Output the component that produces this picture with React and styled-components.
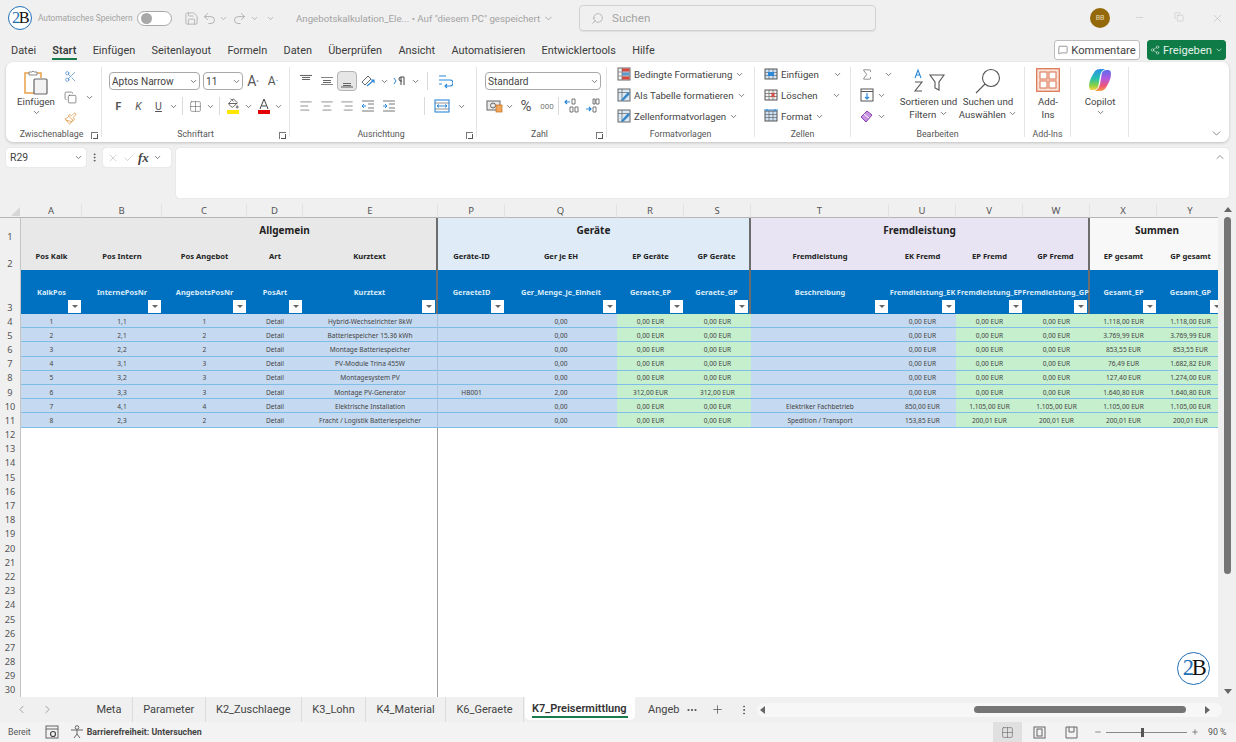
import styled, { createGlobalStyle } from "styled-components";
import {
  AlignCenter,
  AlignLeft,
  AlignRight,
  ChevronDown,
  ChevronLeft,
  ChevronRight,
  ChevronUp,
  Check,
  Copy,
  Grid2x2,
  Minus,
  MoreHorizontal,
  MoreVertical,
  PaintBucket,
  Paintbrush,
  Plus,
  Redo2,
  Save,
  Scissors,
  Search,
  Share2,
  Sigma,
  Undo2,
  X,
  MessageSquare,
  Copy as RestoreIcon,
} from "lucide-react";

const GlobalStyle = createGlobalStyle`
  html, body { margin: 0; padding: 0; background: #f0f0f0; }
  * { box-sizing: border-box; }
  body { font-family: Roboto, "Liberation Sans", sans-serif; color: #444; }
`;

// Spalten der Tabelle
const columns = [
  { id: "A", w: 61, label: "Pos Kalk", field: "KalkPos" },
  { id: "B", w: 80, label: "Pos Intern", field: "InternePosNr" },
  { id: "C", w: 85, label: "Pos Angebot", field: "AngebotsPosNr" },
  { id: "D", w: 56, label: "Art", field: "PosArt" },
  { id: "E", w: 135, label: "Kurztext", field: "Kurztext", end: true },
  { id: "P", w: 67, label: "Geräte-ID", field: "GeraeteID" },
  { id: "Q", w: 112, label: "Ger je EH", field: "Ger_Menge_je_Einheit" },
  { id: "R", w: 67, label: "EP Geräte", field: "Geraete_EP", green: true },
  { id: "S", w: 67, label: "GP Geräte", field: "Geraete_GP", green: true, end: true },
  { id: "T", w: 138, label: "Fremdleistung", field: "Beschreibung" },
  { id: "U", w: 67, label: "EK Fremd", field: "Fremdleistung_EK" },
  { id: "V", w: 67, label: "EP Fremd", field: "Fremdleistung_EP", green: true },
  { id: "W", w: 67, label: "GP Fremd", field: "Fremdleistung_GP", green: true, end: true },
  { id: "X", w: 67, label: "EP gesamt", field: "Gesamt_EP", green: true },
  { id: "Y", w: 67, label: "GP gesamt", field: "Gesamt_GP", green: true },
];

const groups = [
  { title: "Allgemein", span: 5, bg: "#e8e8e8", inset: 112 },
  { title: "Geräte", span: 4, bg: "#dfebf7" },
  { title: "Fremdleistung", span: 4, bg: "#e8e4f3" },
  { title: "Summen", span: 2, bg: "#f8f8f8", last: true },
];

const Z = "0,00 EUR";
const rows = [
  ["1", "1,1", "1", "Detail", "Hybrid-Wechselrichter 8kW", "", "0,00", Z, Z, "", Z, Z, Z, "1.118,00 EUR", "1.118,00 EUR"],
  ["2", "2,1", "2", "Detail", "Batteriespeicher 15.36 kWh", "", "0,00", Z, Z, "", Z, Z, Z, "3.769,99 EUR", "3.769,99 EUR"],
  ["3", "2,2", "2", "Detail", "Montage Batteriespeicher", "", "0,00", Z, Z, "", Z, Z, Z, "853,55 EUR", "853,55 EUR"],
  ["4", "3,1", "3", "Detail", "PV-Module Trina 455W", "", "0,00", Z, Z, "", Z, Z, Z, "76,49 EUR", "1.682,82 EUR"],
  ["5", "3,2", "3", "Detail", "Montagesystem PV", "", "0,00", Z, Z, "", Z, Z, Z, "127,40 EUR", "1.274,00 EUR"],
  ["6", "3,3", "3", "Detail", "Montage PV-Generator", "HB001", "2,00", "312,00 EUR", "312,00 EUR", "", Z, Z, Z, "1.640,80 EUR", "1.640,80 EUR"],
  ["7", "4,1", "4", "Detail", "Elektrische Installation", "", "0,00", Z, Z, "Elektriker Fachbetrieb", "850,00 EUR", "1.105,00 EUR", "1.105,00 EUR", "1.105,00 EUR", "1.105,00 EUR"],
  ["8", "2,3", "2", "Detail", "Fracht / Logistik Batteriespeicher", "", "0,00", Z, Z, "Spedition / Transport", "153,85 EUR", "200,01 EUR", "200,01 EUR", "200,01 EUR", "200,01 EUR"],
];

const emptyRows = Array.from({ length: 19 }, (_, i) => i + 12);
const menuItems = ["Datei", "Start", "Einfügen", "Seitenlayout", "Formeln", "Daten", "Überprüfen", "Ansicht", "Automatisieren", "Entwicklertools", "Hilfe"];
const sheetTabs = ["Meta", "Parameter", "K2_Zuschlaege", "K3_Lohn", "K4_Material", "K6_Geraete"];

const Page = styled.div`
  width: 1236px;
  height: 742px;
  overflow: hidden;
  display: flex;
  flex-direction: column;
  background: #f0f0f0;
`;

/* Titelleiste */
const TitleBar = styled.div`
  height: 36px;
  flex: none;
  display: flex;
  align-items: center;
  padding-left: 8px;
  color: #a3a3a3;
`;

const LogoCircle = styled.div`
  width: ${(p) => p.$size}px;
  height: ${(p) => p.$size}px;
  flex: none;
  border-radius: 50%;
  border: ${(p) => (p.$size > 28 ? 1.5 : 1.2)}px solid #1f6fb5;
  background: #fff;
  display: flex;
  align-items: center;
  justify-content: center;
  font-family: "Liberation Serif", serif;
  font-size: ${(p) => p.$size * 0.68}px;
  line-height: 1;
  letter-spacing: -0.1em;
  color: #111;
  span { color: #1f6fb5; }
`;

const FloatingLogo = styled.div`
  position: absolute;
  right: 26px;
  top: 448px;
`;

const AutoSave = styled.span`
  font-size: 8.3px;
  margin-left: 6px;
  width: 99px;
  flex: none;
  white-space: nowrap;
`;

const Toggle = styled.div`
  width: 35px;
  height: 15px;
  flex: none;
  border-radius: 8px;
  border: 1px solid #a8a8a8;
  background: #fff;
  display: flex;
  align-items: center;
  padding-left: 3px;
  margin-right: 9px;
  &::before {
    content: "";
    width: 11px;
    height: 11px;
    border-radius: 50%;
    background: #a8a8a8;
  }
`;

const QuickSlot = styled.span`
  width: ${(p) => p.$w || 20}px;
  display: flex;
  justify-content: center;
  flex: none;
  color: #a6a6a6;
`;

const FileName = styled.span`
  font-size: 9.7px;
  width: 283px;
  flex: none;
  margin-left: 15px;
  white-space: nowrap;
  display: flex;
  align-items: center;
  gap: 3px;
`;

const SearchBox = styled.div`
  width: 297px;
  height: 26px;
  flex: none;
  border: 1px solid #d2d2d2;
  border-radius: 4px;
  box-shadow: 0 1px 1px #ddd;
  display: flex;
  align-items: center;
  gap: 8px;
  padding-left: 11px;
  font-size: 11.6px;
`;

const Avatar = styled.div`
  width: 20px;
  height: 20px;
  flex: none;
  margin-left: 214px;
  border-radius: 50%;
  background: #94690c;
  color: #e8d9b8;
  font-size: 7px;
  display: flex;
  align-items: center;
  justify-content: center;
`;

const WindowButtons = styled.div`
  display: flex;
  margin-left: 10px;
`;

const WindowButton = styled.span`
  width: 39px;
  display: flex;
  justify-content: center;
  color: #b5b5b5;
`;

/* Menüband-Reiter */
const MenuBar = styled.div`
  height: 26px;
  flex: none;
  display: flex;
  align-items: center;
  padding: 2px 10px 0 11px;
`;

const MenuItem = styled.span`
  font-size: 10.9px;
  margin-right: 16.3px;
  color: #3c3c3c;
  font-weight: ${(p) => (p.$active ? 600 : 400)};
  position: relative;
  &::after {
    content: ${(p) => (p.$active ? '""' : "none")};
    position: absolute;
    left: 0;
    right: -1px;
    bottom: -3px;
    height: 2px;
    background: #1b7a4a;
  }
`;

const MenuActions = styled.div`
  margin-left: auto;
  display: flex;
  gap: 7px;
`;

const CommentButton = styled.div`
  width: 86px;
  height: 20px;
  background: #fff;
  border: 1px solid #bdbdbd;
  border-radius: 3px;
  display: flex;
  align-items: center;
  justify-content: center;
  gap: 3px;
  font-size: 11.2px;
`;

const ShareButton = styled(CommentButton)`
  width: 79px;
  background: #0f7b46;
  border-color: #0f7b46;
  color: #e4f2ea;
`;

/* Menüband */
const Ribbon = styled.div`
  margin: 0 7px 0 6px;
  height: 80px;
  flex: none;
  background: #fff;
  border-radius: 7px;
  box-shadow: 0 1px 3px rgba(0, 0, 0, 0.2);
  padding-top: 5px;
  display: flex;
  color: #444;
`;

const Group = styled.div`
  width: ${(p) => p.$w}px;
  height: 70px;
  flex: none;
  position: relative;
  border-right: 1px solid #e4e4e4;
`;

const GroupBody = styled.div`
  height: 60px;
  padding-left: ${(p) => p.$pad || 0}px;
  display: flex;
  flex-direction: ${(p) => (p.$col ? "column" : "row")};
  gap: ${(p) => (p.$col ? 7 : 0)}px;
  padding-top: ${(p) => (p.$col ? 5 : 0)}px;
`;

const GroupLabel = styled.div`
  height: 10px;
  line-height: 14px;
  font-size: 8.8px;
  text-align: center;
  color: #555;
  white-space: nowrap;
  padding-right: ${(p) => p.$shift || 0}px;
`;

const Launcher = styled.span`
  position: absolute;
  right: 3px;
  bottom: -2px;
  width: 7px;
  height: 7px;
  border-left: 1px solid #777;
  border-top: 1px solid #777;
  &::after {
    content: "";
    position: absolute;
    right: 0;
    bottom: 0;
    width: 4px;
    height: 4px;
    border-right: 1px solid #555;
    border-bottom: 1px solid #555;
  }
`;

const Row = styled.div`
  height: 18px;
  display: flex;
  align-items: center;
`;

const Slot = styled.span`
  width: ${(p) => p.$w || 20}px;
  height: ${(p) => p.$h || 18}px;
  flex: none;
  display: flex;
  align-items: center;
  justify-content: center;
  font-size: ${(p) => p.$size || 11}px;
  font-weight: ${(p) => (p.$bold ? 700 : 400)};
  font-style: ${(p) => (p.$italic ? "italic" : "normal")};
  text-decoration: ${(p) => (p.$under ? "underline" : "none")};
  color: ${(p) => p.$color || "#555"};
`;

const ActiveSlot = styled(Slot)`
  background: #e6e6e6;
  border: 1px solid #b4b4b4;
  border-radius: 4px;
  height: 20px;
`;

const Divider = styled.span`
  width: 1px;
  height: 18px;
  flex: none;
  background: #dadada;
  margin: 0 ${(p) => p.$m || 4}px;
`;

const SelectBox = styled.div`
  width: ${(p) => p.$w}px;
  height: 18px;
  flex: none;
  margin-right: ${(p) => p.$mr || 0}px;
  border: 1px solid #a9a9a9;
  border-radius: 4px;
  padding: 0 1px 0 2px;
  display: flex;
  align-items: center;
  justify-content: space-between;
  font-size: 10.1px;
  color: #444;
`;

const Caret = styled(ChevronDown).attrs({ size: 9, strokeWidth: 2 })`
  flex: none;
  color: #555;
`;

const ClipColumn = styled.div`
  display: flex;
  flex-direction: column;
  align-items: center;
  width: ${(p) => p.$w}px;
  margin-left: ${(p) => p.$ml || 0}px;
  font-size: 9.7px;
  line-height: 13px;
  color: #444;
  flex: none;
  text-align: center;
  white-space: nowrap;
`;

const BigIcon = styled.div`
  height: 26px;
  margin: 1px 0 1px;
  display: flex;
  justify-content: center;
`;

const SideColumn = styled.div`
  display: flex;
  flex-direction: column;
  gap: 3px;
`;

const StyleRow = styled.div`
  height: 14px;
  margin-top: ${(p) => (p.$first ? 0 : 7)}px;
  display: flex;
  align-items: center;
  gap: 3px;
  font-size: 9.7px;
  white-space: nowrap;
  color: #444;
  padding-left: ${(p) => p.$pad || 0}px;
`;

const Spread = styled.span`
  width: ${(p) => p.$w}px;
  flex: none;
`;

const Collapse = styled.div`
  margin-left: auto;
  align-self: flex-end;
  margin-bottom: 4px;
  padding-right: 6px;
  color: #555;
  height: 13px;
`;

/* Bearbeitungsleiste */
const FormulaBar = styled.div`
  display: flex;
  flex: none;
  height: 50px;
  margin: 6px 7px 0 6px;
  align-items: flex-start;
`;

const NameBox = styled.div`
  width: 80px;
  height: 19px;
  background: #fff;
  border-radius: 3px;
  box-shadow: 0 0 1px #bbb;
  display: flex;
  align-items: center;
  justify-content: space-between;
  padding: 0 3px 0 4px;
  font-size: 10.4px;
`;

const Dots = styled.div`
  width: 17px;
  height: 19px;
  display: flex;
  justify-content: center;
  align-items: center;
  color: #555;
`;

const FxBox = styled.div`
  width: 68px;
  height: 19px;
  background: #fff;
  border-radius: 3px;
  box-shadow: 0 0 1px #bbb;
  display: flex;
  align-items: center;
  padding-left: 4px;
  gap: 4px;
  color: #b0b0b0;
`;

const FxText = styled.span`
  font-family: "Liberation Serif", serif;
  font-style: italic;
  font-weight: 700;
  font-size: 13px;
  color: #444;
  margin-left: -1px;
`;

const FormulaInput = styled.div`
  flex: 1;
  height: 50px;
  margin-left: 5px;
  background: #fff;
  border-radius: 3px;
  box-shadow: 0 0 1px #bbb;
  display: flex;
  justify-content: flex-end;
  padding: 3px 3px 0 0;
  color: #666;
`;

/* Tabellenblatt */
const SheetArea = styled.div`
  margin-top: 6px;
  height: 493px;
  flex: none;
  display: flex;
  position: relative;
`;

const SheetClip = styled.div`
  width: 1218px;
  overflow: hidden;
  background: #fff;
`;

const SheetGrid = styled.div`
  display: grid;
  width: 1224px;
  font-family: "Noto Sans", "Liberation Sans", sans-serif;
  grid-template-columns: 21px ${columns.map((c) => `${c.w}px`).join(" ")};
  grid-template-rows: 14px 25px 27px 44px repeat(27, 14.2px);
`;

const Corner = styled.div`
  background: #f0f0f0;
  border-bottom: 1px solid #b5b5b5;
  display: flex;
  align-items: flex-end;
  justify-content: flex-end;
  padding: 0 1px 1px 0;
  &::after {
    content: "";
    border-style: solid;
    border-width: 0 0 9px 9px;
    border-color: transparent transparent #d6d6d6 transparent;
  }
`;

const ColHead = styled.div`
  background: #f0f0f0;
  border-bottom: 1px solid #b5b5b5;
  border-right: 1px solid #e2e2e2;
  font-size: 9.5px;
  line-height: 14px;
  text-align: center;
  color: #555;
`;

const RowHead = styled.div`
  background: #f0f0f0;
  border-right: 1px solid #c4c4c4;
  font-size: 9.2px;
  line-height: 13px;
  color: #555;
  display: flex;
  justify-content: center;
  align-items: ${(p) => (p.$bottom ? "flex-end" : "center")};
`;

const GroupTitle = styled.div`
  grid-column: span ${(p) => p.$span};
  background: ${(p) => p.$bg};
  padding-left: ${(p) => p.$inset || 0}px;
  border-right: ${(p) => (p.$last ? "none" : "2px solid #6d6d6d")};
  font-size: 10px;
  font-weight: 700;
  color: #222;
  text-align: center;
  padding-top: 5px;
  line-height: 14px;
`;

const LabelCell = styled.div`
  background: ${(p) => p.$bg};
  border-right: ${(p) => (p.$end ? "2px solid #6d6d6d" : "none")};
  font-size: 7.6px;
  font-weight: 700;
  color: #222;
  padding-bottom: 1px;
  display: flex;
  align-items: center;
  justify-content: center;
  white-space: nowrap;
`;

const FieldCell = styled.div`
  position: relative;
  background: #0070c0;
  color: #d9ecfa;
  border-right: ${(p) => (p.$end ? "2px solid #6d6d6d" : "none")};
  font-size: 7.4px;
  font-weight: 700;
  display: flex;
  align-items: center;
  justify-content: center;
  white-space: nowrap;
`;

const FilterButton = styled.span`
  position: absolute;
  right: 1px;
  bottom: 1px;
  width: 13px;
  height: 13px;
  background: #fff;
  display: flex;
  align-items: center;
  justify-content: center;
  &::after {
    content: "";
    border-style: solid;
    border-width: 3px 3px 0 3px;
    border-color: #666 transparent transparent transparent;
  }
`;

const DataCell = styled.div`
  background: ${(p) => (p.$green ? "#c6efce" : "#c5d9f0")};
  border-bottom: 1px solid #7dbde8;
  border-right: ${(p) => (p.$divider ? "1px solid #a9c1dd" : "none")};
  font-size: 6.6px;
  color: #444;
  padding-top: 1px;
  display: flex;
  align-items: center;
  justify-content: center;
  white-space: nowrap;
`;

const EmptyCell = styled.div`
  grid-column: span ${(p) => p.$span};
  background: #fff;
  border-right: ${(p) => (p.$divider ? "1px solid #a0a0a0" : "none")};
`;

const ScrollBar = styled.div`
  width: 18px;
  display: flex;
  flex-direction: column;
  align-items: center;
  padding: 3px 0 0 1px;
`;

const ArrowUp = styled.span`
  border-style: solid;
  border-width: 0 4px 5px 4px;
  border-color: transparent transparent #666 transparent;
`;

const ArrowDown = styled.span`
  margin-top: auto;
  margin-bottom: 3px;
  border-style: solid;
  border-width: 5px 4px 0 4px;
  border-color: #666 transparent transparent transparent;
`;

const Thumb = styled.div`
  width: 7px;
  height: 357px;
  margin-top: 5px;
  border-radius: 4px;
  background: #757575;
`;

/* Blattregister */
const TabBar = styled.div`
  height: 25px;
  flex: none;
  display: flex;
  align-items: center;
  font-size: 11px;
  color: #444;
`;

const TabNav = styled.div`
  width: 86px;
  flex: none;
  display: flex;
  padding-left: 15px;
  gap: 13px;
  color: #777;
`;

const Tab = styled.div`
  padding: 0 10.4px;
  height: 25px;
  flex: none;
  display: flex;
  align-items: center;
  border-right: 1px solid #dcdcdc;
  white-space: nowrap;
  &:last-of-type { border-right: none; }
`;

const ActiveTab = styled.div`
  margin-left: 1px;
  height: 23px;
  flex: none;
  align-self: flex-start;
  width: 110px;
  padding: 0 0 0 7px;
  background: #fff;
  border-radius: 0 0 5px 5px;
  display: flex;
  flex-direction: column;
  justify-content: center;
  font-weight: 600;
  font-size: 11px;
  color: #333;
  white-space: nowrap;
  span {
    border-bottom: 2px solid #1b7a4a;
    padding-bottom: 1px;
    margin-top: 2px;
    width: 96px;
  }
`;

const TabTail = styled.div`
  width: 31px;
  flex: none;
  margin-left: 13px;
  white-space: nowrap;
`;

const TabTool = styled.span`
  width: 26px;
  flex: none;
  display: flex;
  justify-content: center;
  color: #555;
`;

const HScroll = styled.div`
  width: 465px;
  height: 14px;
  flex: none;
  background: #f7f7f7;
  border-radius: 7px;
  display: flex;
  align-items: center;
  padding: 0 7px 0 3px;
`;

const HArrow = styled.span`
  border-style: solid;
  border-width: ${(p) => (p.$right ? "4px 0 4px 5px" : "4px 5px 4px 0")};
  border-color: ${(p) =>
    p.$right ? "transparent transparent transparent #666" : "transparent #666 transparent transparent"};
`;

const HThumb = styled.div`
  width: 212px;
  height: 7px;
  margin: 0 19px 0 209px;
  border-radius: 4px;
  background: #757575;
`;

/* Statusleiste */
const StatusBar = styled.div`
  height: 20px;
  flex: none;
  background: #f3f3f3;
  display: flex;
  align-items: center;
  padding-left: 8px;
  font-size: 8.8px;
  color: #555;
`;

const StatusIcon = styled.span`
  width: 20px;
  margin-left: ${(p) => p.$ml || 0}px;
  display: flex;
  justify-content: center;
  flex: none;
  color: #555;
`;

const StatusStrong = styled.span`
  font-weight: 700;
  color: #444;
`;

const ViewButtons = styled.div`
  margin-left: auto;
  display: flex;
  align-items: center;
  height: 20px;
`;

const ViewButton = styled.span`
  width: 29px;
  height: 20px;
  margin-right: 3px;
  background: ${(p) => (p.$active ? "#e0e0e0" : "transparent")};
  display: flex;
  align-items: center;
  justify-content: center;
  color: #555;
`;

const ZoomBar = styled.div`
  display: flex;
  align-items: center;
  margin-left: 5px;
  padding-right: 4px;
  gap: 4px;
`;

const ZoomTrack = styled.div`
  width: 81px;
  height: 1px;
  background: #888;
  position: relative;
  &::before {
    content: "";
    position: absolute;
    left: 35px;
    top: -4px;
    width: 3px;
    height: 9px;
    background: #555;
  }
`;

const ZoomValue = styled.span`
  margin-left: 5px;
  width: 24px;
  white-space: nowrap;
`;

const Logo = ({ size }) => (
  <LogoCircle $size={size}>
    <span>2</span>B
  </LogoCircle>
);

/* Zeichnungen, die es in den Icon-Paketen nicht gibt */
const PasteIcon = () => (
  <svg width="26" height="27" viewBox="0 0 26 27" fill="none">
    <path d="M6 5H2v20h13" stroke="#e8a04a" strokeWidth="1.5" />
    <path d="M14 5h4v5" stroke="#e8a04a" strokeWidth="1.5" />
    <path d="M6 7V4h2.5a2 2 0 0 1 3 0H14v3z" fill="#fff" stroke="#8a8a8a" />
    <rect x="11" y="11" width="13" height="15" rx="1" fill="#f3f3f3" stroke="#666" strokeWidth="1.2" />
  </svg>
);

const VAlignIcon = ({ pos }) => {
  const y = { top: 2, middle: 5, bottom: 8 }[pos];
  const bar = { top: 2, middle: 13, bottom: 13 }[pos];
  return (
    <svg width="14" height="14" viewBox="0 0 14 14" fill="none">
      {pos === "top" && <path d="M1 1.5h12" stroke="#666" strokeWidth="1.1" />}
      {pos === "bottom" && <path d={`M1 ${bar}h12`} stroke="#666" strokeWidth="1.1" />}
      <path d={`M3 ${y + 1.5}h8M3 ${y + 3.5}h8`} stroke="#666" />
      {pos === "middle" && <path d="M1 3.5h12M1 10.5h12" stroke="#666" strokeWidth="0.8" />}
    </svg>
  );
};

const RuleIcon = () => (
  <svg width="14" height="14" viewBox="0 0 14 14" fill="none">
    <rect x="1" y="1" width="12" height="12" fill="#f4f4f4" stroke="#666" />
    <rect x="5" y="1.5" width="7.5" height="3" fill="#d9453c" />
    <rect x="5" y="5.5" width="7.5" height="3" fill="#5b9bd5" />
    <rect x="5" y="9.5" width="7.5" height="3" fill="#d9453c" />
    <path d="M5 1v12M1 5h12M1 9h12" stroke="#666" strokeWidth="0.6" />
  </svg>
);

const PenGridIcon = () => (
  <svg width="14" height="14" viewBox="0 0 14 14" fill="none">
    <rect x="1" y="1" width="12" height="12" fill="#dbe8f5" stroke="#666" />
    <path d="M1 4.5h12M5 1v12" stroke="#666" strokeWidth="0.7" />
    <path d="M4 12l7-8 2 2-7 7z" fill="#3a87c8" />
  </svg>
);

const CellGridIcon = ({ kind }) => (
  <svg width="14" height="14" viewBox="0 0 14 14" fill="none">
    <rect x="1" y="2" width="12" height="10" fill={kind === "delete" ? "#f0f0f0" : "#cfe2f3"} stroke="#555" />
    <path d="M1 5.5h12M1 8.5h12M5 2v10M9 2v10" stroke="#555" strokeWidth="0.6" />
    {kind === "insert" && <rect x="4" y="5" width="6" height="4" fill="#2b88d8" />}
    {kind === "delete" && <path d="M7 5l4 4M11 5l-4 4" stroke="#d9453c" strokeWidth="1.3" />}
    {kind === "format" && <path d="M0 1h14M3 0v2M11 0v2" stroke="#2b88d8" />}
  </svg>
);

const CurrencyIcon = () => (
  <svg width="18" height="14" viewBox="0 0 18 14" fill="none">
    <rect x="1" y="2" width="13" height="9" fill="#e9e9e9" stroke="#666" />
    <circle cx="7" cy="6.5" r="2.5" stroke="#666" />
    <rect x="10" y="6" width="6" height="7" fill="#f2a65a" stroke="#c46a1a" strokeWidth="0.7" />
  </svg>
);

const DecimalIcon = ({ up }) => (
  <svg width="16" height="16" viewBox="0 0 16 16" fill="none">
    <path d={up ? "M7 4H2m2-2L2 4l2 2" : "M2 11h5m-2-2 2 2-2 2"} stroke="#2b88d8" strokeWidth="1.2" />
    <path d={up ? "M9 1h3v5H9zM7 9h3v5H7zM12 9h3v5h-3z" : "M9 1h2v5H9zM12 1h3v5h-3zM9 9h3v5H9z"} stroke="#555" strokeWidth="0.8" />
  </svg>
);

const WrapIcon = () => (
  <svg width="16" height="16" viewBox="0 0 16 16" fill="none">
    <path d="M2 3h7M2 7h11a2 2 0 0 1 0 6H8m2-2-2 2 2 2M2 11h3" stroke="#2b88d8" strokeWidth="1.1" />
  </svg>
);

const MergeIcon = () => (
  <svg width="16" height="16" viewBox="0 0 16 16" fill="none">
    <rect x="1" y="2" width="14" height="12" stroke="#2b88d8" strokeWidth="1.1" />
    <path d="M1 5h14M1 11h14" stroke="#777" strokeWidth="0.8" />
    <path d="M3 8h10M5 6.5 3 8l2 1.5M11 6.5 13 8l-2 1.5" stroke="#2b88d8" />
  </svg>
);

const OrientIcon = () => (
  <svg width="16" height="16" viewBox="0 0 16 16" fill="none">
    <path d="M2 9l6-6 3 3-6 6z" stroke="#666" />
    <path d="M7 13l7-6m-3 0h3v3" stroke="#2b88d8" strokeWidth="1.2" />
  </svg>
);

const IndentIcon = ({ rtl }) => (
  <svg width="14" height="14" viewBox="0 0 14 14" fill="none">
    <path d="M1 2h12M7 5h6M7 9h6M1 12h12" stroke="#777" />
    <path d={rtl ? "M1 7h4M3 5l2 2-2 2" : "M5 7H1M3 5 1 7l2 2"} stroke="#2b88d8" />
  </svg>
);

const ParaIcon = () => (
  <svg width="14" height="12" viewBox="0 0 14 12" fill="none">
    <path d="M1 3l2 3-2 3" stroke="#2b88d8" />
    <path d="M8 2v8M11 2v8M11 2H8a2 2 0 0 0 0 4h1" stroke="#444" />
  </svg>
);

const ColorIcon = ({ color, children }) => (
  <svg width="16" height="16" viewBox="0 0 16 16">
    {children}
    <rect x="2" y="12" width="12" height="4" fill={color} />
  </svg>
);

const FillDownIcon = () => (
  <svg width="14" height="14" viewBox="0 0 14 14" fill="none">
    <rect x="1" y="1" width="12" height="12" stroke="#555" />
    <path d="M1 3.5h12" stroke="#555" />
    <path d="M7 5v6M5 9l2 2 2-2" stroke="#2b88d8" strokeWidth="1.2" />
  </svg>
);

const EraserIcon = () => (
  <svg width="14" height="14" viewBox="0 0 14 14" fill="none">
    <path d="M1 8l6-6 5 4-6 7z" fill="#c792e0" stroke="#8a3fb3" />
    <path d="M4 5l5 4" stroke="#fff" />
  </svg>
);

const SortIcon = () => (
  <svg width="38" height="25" viewBox="0 0 38 25" fill="none">
    <path d="M20 7h14l-5 7v8l-4-2v-6z" stroke="#555" strokeWidth="1.1" />
    <path d="M5 10l3-8 3 8M6 7h4" stroke="#2b88d8" strokeWidth="1.1" />
    <path d="M5 14h7l-7 9h7" stroke="#555" strokeWidth="1.1" />
  </svg>
);

const FindIcon = () => (
  <svg width="26" height="26" viewBox="0 0 26 26" fill="none">
    <circle cx="16" cy="10" r="8.5" stroke="#555" strokeWidth="1.1" />
    <path d="M10 16 1 25" stroke="#555" strokeWidth="1.1" />
  </svg>
);

const AddinIcon = () => (
  <svg width="24" height="24" viewBox="0 0 24 24" fill="none">
    <rect x="0.7" y="0.7" width="22.6" height="22.6" fill="#f8e3d8" stroke="#d9714a" strokeWidth="1.2" />
    <rect x="4" y="4" width="7" height="7" fill="#fff" stroke="#d9714a" />
    <rect x="13" y="4" width="7" height="7" fill="#fff" stroke="#d9714a" />
    <rect x="4" y="13" width="7" height="7" fill="#fff" stroke="#d9714a" />
    <rect x="13" y="13" width="7" height="7" fill="#fff" stroke="#d9714a" />
  </svg>
);

const CopilotIcon = () => (
  <svg width="24" height="24" viewBox="0 0 24 24" fill="none">
    <defs>
      <linearGradient id="copLeft" x1="0" y1="0" x2="0" y2="1">
        <stop offset="0" stopColor="#2a8fe8" />
        <stop offset="0.45" stopColor="#25c0b0" />
        <stop offset="0.75" stopColor="#7fd04a" />
        <stop offset="1" stopColor="#f5d43b" />
      </linearGradient>
      <linearGradient id="copRight" x1="0" y1="0" x2="0" y2="1">
        <stop offset="0" stopColor="#5b6bea" />
        <stop offset="0.4" stopColor="#b05ae0" />
        <stop offset="0.75" stopColor="#f0567a" />
        <stop offset="1" stopColor="#f59a3b" />
      </linearGradient>
    </defs>
    <path d="M7 3Q9 1 12 1H17Q13 3 12 8L10.5 17Q10 22 5 22H4Q1 22 1 18Q1 14 3 10Q5 6 7 3Z" fill="url(#copLeft)" />
    <path d="M17 21Q15 23 12 23H7Q11 21 12 16L13.5 7Q14 2 19 2H20Q23 2 23 6Q23 10 21 14Q19 18 17 21Z" fill="url(#copRight)" />
  </svg>
);

const AccessIcon = () => (
  <svg width="16" height="14" viewBox="0 0 16 14" fill="none">
    <circle cx="8" cy="2.5" r="1.8" stroke="#666" />
    <path d="M2 5h12M8 5v4M5 13l3-4 3 4" stroke="#666" />
  </svg>
);

const MacroIcon = () => (
  <svg width="14" height="14" viewBox="0 0 14 14" fill="none">
    <rect x="1" y="1" width="12" height="12" stroke="#666" />
    <path d="M1 4h12" stroke="#666" />
    <circle cx="8" cy="9" r="2.5" stroke="#444" strokeWidth="1.2" />
  </svg>
);

const PageLayoutIcon = () => (
  <svg width="13" height="13" viewBox="0 0 13 13" fill="none">
    <rect x="1" y="1" width="11" height="11" stroke="#666" />
    <rect x="4" y="3" width="5" height="7" stroke="#666" />
  </svg>
);

const BreakIcon = () => (
  <svg width="13" height="13" viewBox="0 0 13 13" fill="none">
    <path d="M1 1v11h11V1M4 1v5h5V1M1 1h11" stroke="#666" />
  </svg>
);

export default function App() {
  return (
    <Page>
      <GlobalStyle />

      <TitleBar>
        <Logo size={24} />
        <AutoSave>Automatisches Speichern</AutoSave>
        <Toggle />
        <QuickSlot><Save size={15} strokeWidth={1.2} /></QuickSlot>
        <QuickSlot $w={16}><Undo2 size={15} strokeWidth={1.3} /></QuickSlot>
        <QuickSlot $w={12}><ChevronDown size={9} /></QuickSlot>
        <QuickSlot $w={20}><Redo2 size={15} strokeWidth={1.3} /></QuickSlot>
        <QuickSlot $w={10}><ChevronDown size={9} /></QuickSlot>
        <QuickSlot $w={22}><ChevronDown size={9} /></QuickSlot>
        <FileName>
          Angebotskalkulation_Ele... • Auf "diesem PC" gespeichert <ChevronDown size={11} />
        </FileName>
        <SearchBox>
          <Search size={13} strokeWidth={1.3} style={{ transform: "scaleX(-1)" }} />
          Suchen
        </SearchBox>
        <Avatar>BB</Avatar>
        <WindowButtons>
          <WindowButton><Minus size={11} strokeWidth={1} /></WindowButton>
          <WindowButton><RestoreIcon size={10} strokeWidth={1} /></WindowButton>
          <WindowButton><X size={13} strokeWidth={1} /></WindowButton>
        </WindowButtons>
      </TitleBar>

      <MenuBar>
        {menuItems.map((item) => (
          <MenuItem key={item} $active={item === "Start"}>{item}</MenuItem>
        ))}
        <MenuActions>
          <CommentButton><MessageSquare size={10} strokeWidth={1.3} />Kommentare</CommentButton>
          <ShareButton><Share2 size={10} strokeWidth={1.3} />Freigeben<ChevronDown size={8} /></ShareButton>
        </MenuActions>
      </MenuBar>

      <Ribbon>
        <Group $w={96}>
          <GroupBody>
            <ClipColumn $w={50} $ml={5}>
              <BigIcon><PasteIcon /></BigIcon>
              Einfügen
              <Caret />
            </ClipColumn>
            <SideColumn>
              <Row><Slot $w={18} $color="#3a7cc0"><Scissors size={13} strokeWidth={1.2} /></Slot></Row>
              <Row><Slot $w={18}><Copy size={13} strokeWidth={1.2} /></Slot><Slot $w={20}><Caret /></Slot></Row>
              <Row><Slot $w={18} $color="#d98a2b"><Paintbrush size={13} strokeWidth={1.3} /></Slot></Row>
            </SideColumn>
          </GroupBody>
          <GroupLabel $shift={4}>Zwischenablage</GroupLabel>
          <Launcher />
        </Group>

        <Group $w={188}>
          <GroupBody $col $pad={7}>
            <Row>
              <SelectBox $w={91} $mr={3}>Aptos Narrow<Caret /></SelectBox>
              <SelectBox $w={40}>11<Caret /></SelectBox>
              <Slot $w={20} $size={14}>A<sup style={{ fontSize: 6 }}>^</sup></Slot>
              <Slot $w={20} $size={12}>A<sup style={{ fontSize: 6, color: "#2b88d8" }}>ˇ</sup></Slot>
            </Row>
            <Row>
              <Slot $w={19} $bold $size={10.5}>F</Slot>
              <Slot $w={21} $italic $size={10.5}>K</Slot>
              <Slot $w={19} $under $size={10.5}>U</Slot>
              <Slot $w={11}><Caret /></Slot>
              <Divider $m={3} />
              <Slot $w={18}><Grid2x2 size={13} strokeWidth={1} /></Slot>
              <Slot $w={12}><Caret /></Slot>
              <Divider $m={3} />
              <Slot $w={19}>
                <ColorIcon color="#ffe600"><PaintBucket x="3" y="0" width="11" height="11" stroke="#555" /></ColorIcon>
              </Slot>
              <Slot $w={12}><Caret /></Slot>
              <Slot $w={19}>
                <ColorIcon color="#e00000"><path d="M4 11 8 1l4 10M5.5 8h5" stroke="#444" fill="none" /></ColorIcon>
              </Slot>
              <Slot $w={11}><Caret /></Slot>
            </Row>
          </GroupBody>
          <GroupLabel>Schriftart</GroupLabel>
          <Launcher />
        </Group>

        <Group $w={187}>
          <GroupBody $col $pad={6}>
            <Row>
              <Slot $w={20}><VAlignIcon pos="top" /></Slot>
              <Slot $w={21}><VAlignIcon pos="middle" /></Slot>
              <ActiveSlot $w={20}><VAlignIcon pos="bottom" /></ActiveSlot>
              <Slot $w={22}><OrientIcon /></Slot>
              <Slot $w={11}><Caret /></Slot>
              <Slot $w={20}><ParaIcon /></Slot>
              <Slot $w={11}><Caret /></Slot>
              <Divider $m={6} />
              <Slot $w={22}><WrapIcon /></Slot>
            </Row>
            <Row>
              <Slot $w={20}><AlignLeft size={14} strokeWidth={1.1} /></Slot>
              <Slot $w={21}><AlignCenter size={14} strokeWidth={1.1} /></Slot>
              <Slot $w={20}><AlignRight size={14} strokeWidth={1.1} /></Slot>
              <Slot $w={21}><IndentIcon /></Slot>
              <Slot $w={21}><IndentIcon rtl /></Slot>
              <Spread $w={19} />
              <Divider $m={6} />
              <Slot $w={22}><MergeIcon /></Slot>
              <Slot $w={16}><Caret /></Slot>
            </Row>
          </GroupBody>
          <GroupLabel $shift={4}>Ausrichtung</GroupLabel>
          <Launcher />
        </Group>

        <Group $w={130}>
          <GroupBody $col $pad={8}>
            <Row><SelectBox $w={116}>Standard<Caret /></SelectBox></Row>
            <Row>
              <Slot $w={20}><CurrencyIcon /></Slot>
              <Slot $w={9}><Caret /></Slot>
              <Slot $w={24} $size={15}>%</Slot>
              <Slot $w={18} $size={8} $color="#777">000</Slot>
              <Divider $m={2} />
              <Slot $w={20}><DecimalIcon up /></Slot>
              <Slot $w={22}><DecimalIcon /></Slot>
            </Row>
          </GroupBody>
          <GroupLabel $shift={4}>Zahl</GroupLabel>
          <Launcher />
        </Group>

        <Group $w={148}>
          <GroupBody>
            <div>
              <StyleRow $first $pad={10}><RuleIcon />Bedingte Formatierung<Caret /></StyleRow>
              <StyleRow $pad={10}><PenGridIcon />Als Tabelle formatieren<Caret /></StyleRow>
              <StyleRow $pad={10}><PenGridIcon />Zellenformatvorlagen<Caret /></StyleRow>
            </div>
          </GroupBody>
          <GroupLabel>Formatvorlagen</GroupLabel>
        </Group>

        <Group $w={96}>
          <GroupBody>
            <div>
              <StyleRow $first $pad={9}><CellGridIcon kind="insert" />Einfügen<Spread $w={8} /><Caret /></StyleRow>
              <StyleRow $pad={9}><CellGridIcon kind="delete" />Löschen<Spread $w={8} /><Caret /></StyleRow>
              <StyleRow $pad={9}><CellGridIcon kind="format" />Format<Caret /></StyleRow>
            </div>
          </GroupBody>
          <GroupLabel>Zellen</GroupLabel>
        </Group>

        <Group $w={174}>
          <GroupBody>
            <div>
              <StyleRow $first $pad={9}><Slot $w={14} $h={14}><Sigma size={15} strokeWidth={1.1} /></Slot><Spread $w={4} /><Caret /></StyleRow>
              <StyleRow $pad={9}><FillDownIcon /><Caret /></StyleRow>
              <StyleRow $pad={9}><EraserIcon /><Caret /></StyleRow>
            </div>
            <ClipColumn $w={59} $ml={6}>
              <BigIcon><SortIcon /></BigIcon>
              Sortieren und
              <span>Filtern <Caret /></span>
            </ClipColumn>
            <ClipColumn $w={60}>
              <BigIcon><FindIcon /></BigIcon>
              Suchen und
              <span>Auswählen <Caret /></span>
            </ClipColumn>
          </GroupBody>
          <GroupLabel>Bearbeiten</GroupLabel>
        </Group>

        <Group $w={46}>
          <GroupBody>
            <ClipColumn $w={46}>
              <BigIcon><AddinIcon /></BigIcon>
              Add-
              <span>Ins</span>
            </ClipColumn>
          </GroupBody>
          <GroupLabel>Add-Ins</GroupLabel>
        </Group>

        <Group $w={58}>
          <GroupBody>
            <ClipColumn $w={58}>
              <BigIcon><CopilotIcon /></BigIcon>
              Copilot
              <Caret />
            </ClipColumn>
          </GroupBody>
        </Group>

        <Collapse><ChevronDown size={13} strokeWidth={1.3} /></Collapse>
      </Ribbon>

      <FormulaBar>
        <NameBox>R29<Caret /></NameBox>
        <Dots><MoreVertical size={11} strokeWidth={2} /></Dots>
        <FxBox>
          <X size={12} strokeWidth={1.1} />
          <Check size={12} strokeWidth={1.1} />
          <FxText>fx</FxText>
          <Caret />
        </FxBox>
        <FormulaInput><ChevronUp size={12} strokeWidth={1.4} /></FormulaInput>
      </FormulaBar>

      <SheetArea>
        <SheetClip>
          <SheetGrid>
            <Corner />
            {columns.map((c) => (
              <ColHead key={c.id}>{c.id}</ColHead>
            ))}

            <RowHead $bottom>1</RowHead>
            {groups.map((g) => (
              <GroupTitle key={g.title} $span={g.span} $bg={g.bg} $inset={g.inset} $last={g.last}>
                {g.title}
              </GroupTitle>
            ))}

            <RowHead $bottom>2</RowHead>
            {groups.map((g, gi) => {
              const start = groups.slice(0, gi).reduce((sum, x) => sum + x.span, 0);
              return columns.slice(start, start + g.span).map((c) => (
                <LabelCell key={c.id} $bg={g.bg} $end={c.end}>{c.label}</LabelCell>
              ));
            })}

            <RowHead $bottom>3</RowHead>
            {columns.map((c) => (
              <FieldCell key={c.id} $end={c.end}>
                {c.field}
                <FilterButton />
              </FieldCell>
            ))}

            {rows.map((row, i) => [
              <RowHead key={`h${i}`}>{i + 4}</RowHead>,
              ...row.map((value, j) => (
                <DataCell key={`${i}-${j}`} $green={columns[j].green} $divider={j === 4}>
                  {value}
                </DataCell>
              )),
            ])}

            {emptyRows.map((n) => [
              <RowHead key={`h${n}`}>{n}</RowHead>,
              <EmptyCell key={`l${n}`} $span={5} $divider />,
              <EmptyCell key={`r${n}`} $span={10} />,
            ])}
          </SheetGrid>
        </SheetClip>
        <ScrollBar>
          <ArrowUp />
          <Thumb />
          <ArrowDown />
        </ScrollBar>
        <FloatingLogo><Logo size={33} /></FloatingLogo>
      </SheetArea>

      <TabBar>
        <TabNav>
          <ChevronLeft size={13} strokeWidth={1.2} />
          <ChevronRight size={13} strokeWidth={1.2} />
        </TabNav>
        {sheetTabs.map((t) => (
          <Tab key={t}>{t}</Tab>
        ))}
        <ActiveTab><span>K7_Preisermittlung</span></ActiveTab>
        <TabTail>Angeb</TabTail>
        <TabTool><MoreHorizontal size={12} strokeWidth={2.4} /></TabTool>
        <TabTool><Plus size={13} strokeWidth={1.4} /></TabTool>
        <TabTool><MoreVertical size={12} strokeWidth={2} /></TabTool>
        <HScroll>
          <HArrow />
          <HThumb />
          <HArrow $right />
        </HScroll>
      </TabBar>

      <StatusBar>
        Bereit
        <StatusIcon $ml={11}><MacroIcon /></StatusIcon>
        <StatusIcon $ml={5}><AccessIcon /></StatusIcon>
        <StatusStrong>Barrierefreiheit: Untersuchen</StatusStrong>
        <ViewButtons>
          <ViewButton $active><Grid2x2 size={13} strokeWidth={1} /></ViewButton>
          <ViewButton><PageLayoutIcon /></ViewButton>
          <ViewButton><BreakIcon /></ViewButton>
        </ViewButtons>
        <ZoomBar>
          <Minus size={8} />
          <ZoomTrack />
          <Plus size={8} />
          <ZoomValue>90 %</ZoomValue>
        </ZoomBar>
      </StatusBar>
    </Page>
  );
}
